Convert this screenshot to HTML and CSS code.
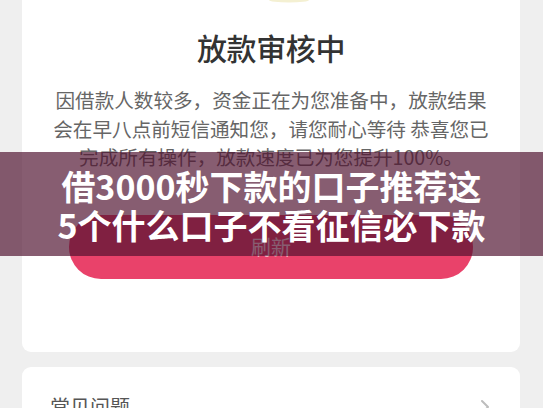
FILE: index.html
```html
<!DOCTYPE html>
<html lang="zh-CN">
<head>
<meta charset="utf-8">
<title>放款审核中</title>
<link rel="stylesheet" href="styles.css">
</head>
<body>
<div class="page">
  <section class="card status-card">
    <svg class="status-icon" width="60" height="3" viewBox="0 0 60 3" aria-hidden="true">
      <ellipse cx="30" cy="0" rx="20" ry="2.5" fill="#f4f0d2"/>
    </svg>
    <h1 class="status-title">放款审核中</h1>
    <p class="status-text">因借款人数较多，资金正在为您准备中，放款结果会在早八点前短信通知您，请您耐心等待 恭喜您已完成所有操作，放款速度已为您提升100%。</p>
    <button class="refresh-btn" type="button">刷新</button>
  </section>
  <section class="card faq-card">
    <span class="faq-title">常见问题</span>
    <svg class="chevron" width="10" height="16" viewBox="0 0 10 16" aria-hidden="true">
      <path d="M2 2 L8 8 L2 14" fill="none" stroke="#bdbdbd" stroke-width="2" stroke-linecap="round" stroke-linejoin="round"/>
    </svg>
  </section>
  <div class="banner">
    <p class="banner-text">借3000秒下款的口子推荐这<br>5个什么口子不看征信必下款</p>
  </div>
</div>
</body>
</html>
```

FILE: styles.css
```css
* { box-sizing: border-box; }
html, body {
  margin: 0;
  padding: 0;
  background: #efefef;
  overflow: hidden;
}
body {
  font-family: "Noto Sans CJK SC", "Noto Sans", sans-serif;
  width: 543px;
  height: 408px;
}
.page {
  position: relative;
  padding: 0 23px 0 22px;
  display: flex;
  flex-direction: column;
  gap: 15px;
}
.card {
  background: #fff;
  border-radius: 9px;
}
.status-card {
  border-radius: 0 0 9px 9px;
  display: flex;
  flex-direction: column;
  align-items: center;
  padding: 0 0 73px;
}
.status-icon {
  display: block;
  margin-left: 36px;
}
.status-title {
  margin: 24px 0 0;
  font-size: 30px;
  line-height: 40px;
  font-weight: 500;
  color: #333;
  letter-spacing: -0.4px;
}
.status-text {
  margin: 19px 0 0;
  width: 444px;
  font-size: 19.6px;
  line-height: 28.5px;
  color: #666;
  text-align: center;
}
.refresh-btn {
  margin-top: 43px;
  align-self: stretch;
  margin-left: 47px;
  margin-right: 47px;
  height: 64px;
  border: none;
  border-radius: 32px;
  background: #e9426a;
  color: #fff;
  font-family: inherit;
  font-size: 20px;
}
.faq-card {
  border-radius: 9px 9px 0 0;
  display: flex;
  align-items: center;
  justify-content: space-between;
  padding: 26px 30px 20px 28px;
}
.faq-title {
  font-size: 20px;
  line-height: 28px;
  color: #555;
}
.chevron { display: block; }
.banner {
  position: absolute;
  left: 0;
  top: 152px;
  width: 543px;
  height: 104px;
  background: rgba(78, 16, 46, 0.68);
  display: flex;
  align-items: center;
  justify-content: center;
}
.banner-text {
  margin: 0;
  color: #fff;
  font-size: 34px;
  line-height: 39px;
  font-weight: 700;
  text-align: center;
  padding-top: 2px;
}
```
